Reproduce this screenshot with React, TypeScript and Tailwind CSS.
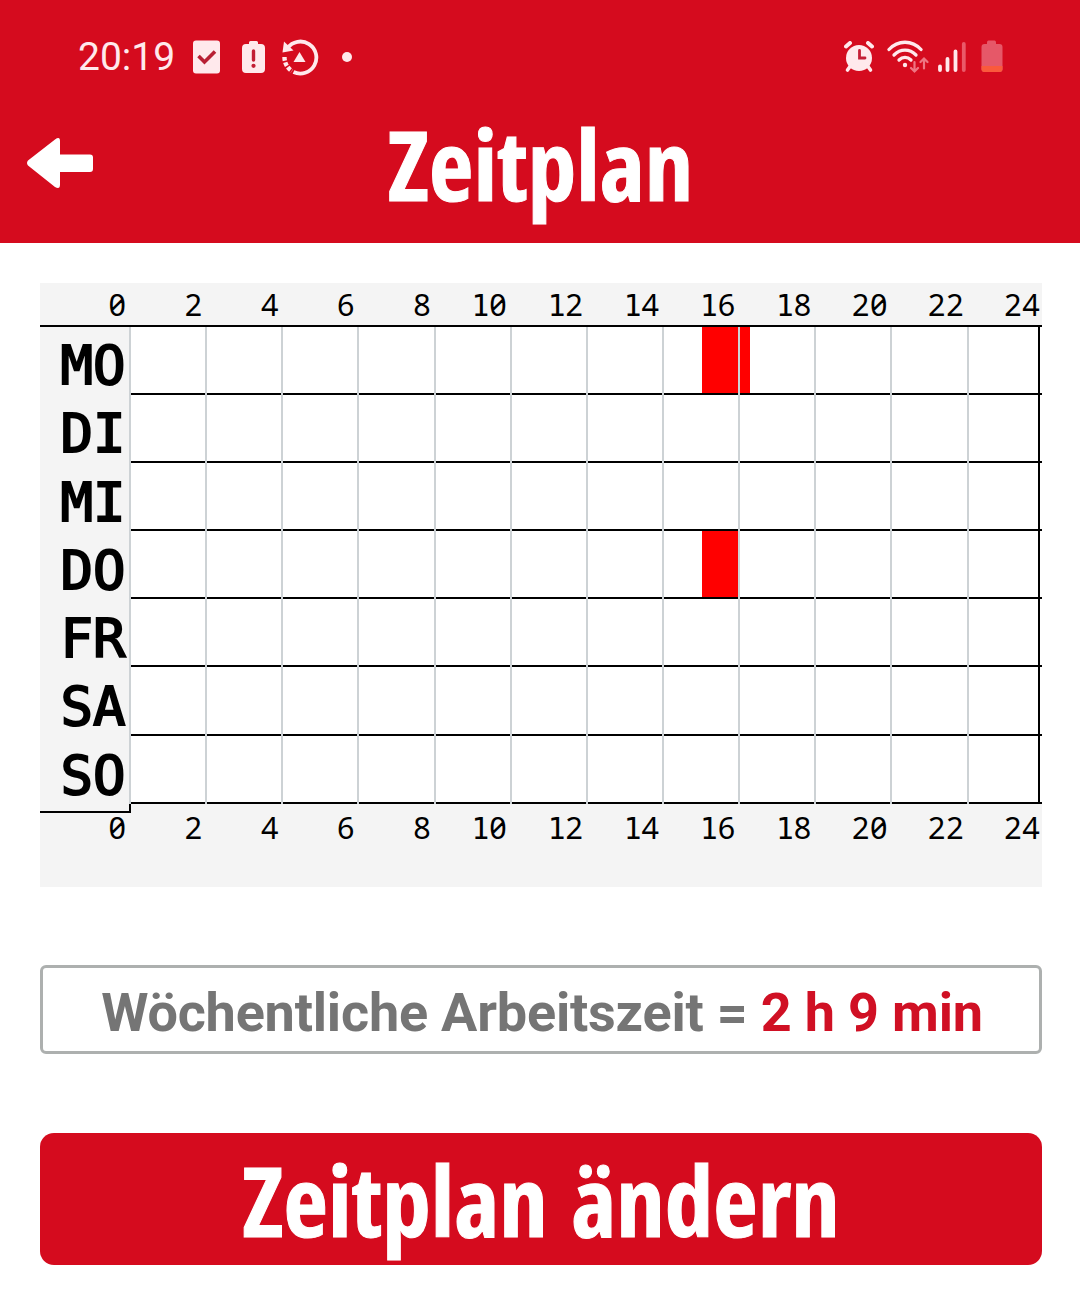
import React from 'react';

interface Slot {
  start: number;
  end: number;
}

interface Day {
  label: string;
  slots: Slot[];
}

const HOURS = [0, 2, 4, 6, 8, 10, 12, 14, 16, 18, 20, 22, 24];
const COLUMNS = HOURS.slice(0, -1);
const HOUR_WIDTH = 38.08;

const days: Day[] = [
  { label: 'MO', slots: [{ start: 15.05, end: 16.31 }] },
  { label: 'DI', slots: [] },
  { label: 'MI', slots: [] },
  { label: 'DO', slots: [{ start: 15.05, end: 16 }] },
  { label: 'FR', slots: [] },
  { label: 'SA', slots: [] },
  { label: 'SO', slots: [] },
];

const StatusBar: React.FC = () => (
  <div className="flex h-[113px] items-start justify-between pl-[78px] pr-[77px] text-[#ffe9ec]">
    <div className="flex h-[113px] items-center">
      <span className="w-[115px] pt-[2px] font-['Roboto'] text-[39px] font-normal leading-none">20:19</span>
      <svg className="h-[34px] w-[27px]" viewBox="0 0 27 34">
        <rect width="27" height="33" y="0.5" rx="3" fill="currentColor" />
        <path d="M5.5 16l6 6L22 11.5" fill="none" stroke="#b81f33" strokeWidth="3.6" />
      </svg>
      <svg className="ml-[22px] h-[34px] w-[23px]" viewBox="0 0 23 34">
        <path d="M7 4V2.500Q7 1 8.500 1h6Q16 1 16 2.500V4h3q4 0 4 4v21q0 4-4 4H4q-4 0-4-4V8q0-4 4-4z" fill="currentColor" />
        <path d="M11.500 11v9" stroke="#c21d33" strokeWidth="3.400" strokeLinecap="round" />
        <circle cx="11.500" cy="25.800" r="2.100" fill="#c21d33" />
      </svg>
      <svg className="ml-[16px] h-[38px] w-[38px]" viewBox="0 0 38 38" fill="none">
        <path d="M6.500 10A16 16 0 1 1 12.500 34" stroke="currentColor" strokeWidth="3.800" />
        <path d="M3.500 19A16 16 0 0 0 11 33" stroke="currentColor" strokeWidth="4.400" strokeDasharray="3.800 1.600" />
        <path d="M3 3.500L1.500 14.500L12.500 12.500z" fill="currentColor" />
        <path d="M18.500 14l6 10H12.500z" fill="currentColor" />
      </svg>
      <span className="ml-[23px] h-[10px] w-[10px] rounded-full bg-[#ffe9ec]" />
    </div>

    <div className="flex h-[113px] items-center">
      <svg className="h-[32px] w-[30px]" viewBox="0 0 30 32" fill="none" stroke="currentColor">
        <circle cx="15" cy="17" r="13" fill="currentColor" stroke="none" />
        <path d="M2 5.500l4-3.500M28 5.500l-4-3.500" strokeWidth="4" strokeLinecap="round" />
        <path d="M6 25.500l-2.500 3.500M24 25.500l2.500 3.500" strokeWidth="3.600" strokeLinecap="round" />
        <path d="M15.500 9.500v7.500h5.500" stroke="#c51e35" strokeWidth="2.800" strokeLinecap="round" />
      </svg>
      <svg className="ml-[13px] h-[34px] w-[42px]" viewBox="0 0 42 34" fill="none" strokeLinecap="round">
        <g stroke="currentColor" strokeWidth="3.300">
          <path d="M2 9.500C11-0.200 25-0.200 34 9.500" />
          <path d="M7 15C13.500 8.500 22.500 8.500 29 15" />
          <path d="M12 20C15.500 16.500 20.500 16.500 24 20" />
        </g>
        <circle cx="18" cy="25" r="2.200" fill="currentColor" />
        <path d="M27.500 22v9.500M24 28l3.500 3.500l3.500-3.500M37 28.500V18.500M33.500 22l3.500-3.500l3.500 3.500" stroke="#ee7683" strokeWidth="2.200" />
      </svg>
      <svg className="ml-[9px] h-[32px] w-[28px]" viewBox="0 0 28 32" stroke="currentColor" strokeWidth="3.800" strokeLinecap="round">
        <path d="M2 25.500v3.500M9.500 18V29M17.500 10.500V29" />
        <path d="M25.800 3v26" stroke="#ea5a69" />
      </svg>
      <svg className="ml-[15px] h-[34px] w-[22px]" viewBox="0 0 22 34">
        <path d="M6 4V2.500Q6 .5 7.500 .5h6Q15 .5 15 2.500V4h3.500Q21.500 4 21.500 7v22q0 3-3 3h-15q-3 0-3-3V7q0-3 3-3z" fill="#e65868" />
        <path d="M.5 26h21v3q0 3-3 3h-15q-3 0-3-3z" fill="#fa5a3c" />
      </svg>
    </div>
  </div>
);

const Header: React.FC = () => (
  <header className="h-[243px] bg-[#d50b1e]">
    <StatusBar />
    <div className="grid h-[100px] grid-cols-[100px_1fr_100px] items-center text-white">
      <button type="button" aria-label="Zurück" className="pl-[27px]">
        <svg className="h-[52px] w-[67px]" viewBox="0 0 67 52" fill="currentColor">
          <path d="M1 23.500L28 2.500Q33 -1 33 4V17.500H63Q66 17.500 66 20.500V32Q66 35 63 35H33V47.500Q33 53 28 50L1 28.500Q-1 26 1 23.500z" />
        </svg>
      </button>
      <h1 className="pl-[1px] text-center font-['Open_Sans'] text-[97px] font-bold leading-none [-webkit-text-stroke:1px_white] [font-stretch:75%]">
        Zeitplan
      </h1>
    </div>
  </header>
);

const HourLabel: React.FC<{ hour: number }> = ({ hour }) => {
  const text = String(hour);
  // The leading 1 keeps its foot serif, the other digits have the slashed zero
  if (text.startsWith('1')) {
    return (
      <>
        <span className="font-['DejaVu_Sans_Mono',monospace] text-[29.500px] tracking-normal">1</span>
        {text.slice(1)}
      </>
    );
  }
  return <>{text}</>;
};

const HourScale: React.FC = () => (
  <div className="ml-[10.500px] flex h-[42px] font-['Noto_Sans',sans-serif] text-[30.500px] leading-[42px] tracking-[0.6px] text-black slashed-zero">
    {HOURS.map((hour) => (
      <span key={hour} className="w-[76.150px] shrink-0 text-right">
        <HourLabel hour={hour} />
      </span>
    ))}
  </div>
);

const DayRow: React.FC<{ day: Day }> = ({ day }) => (
  <div className="relative grid h-[68.100px] grid-cols-[repeat(11,76.150px)_1fr]">
    {day.slots.map((slot) => (
      <div
        key={slot.start}
        className="absolute inset-y-0 bg-[#ff0000]"
        style={{ left: slot.start * HOUR_WIDTH, width: (slot.end - slot.start) * HOUR_WIDTH }}
      />
    ))}
    {COLUMNS.map((hour) => (
      <div key={hour} className="relative flex">
        <div className="w-[2px] bg-[#cdd2d5]" />
        <div className="flex-1 border-b-2 border-black" />
      </div>
    ))}
  </div>
);

const ScheduleChart: React.FC = () => (
  <section className="h-[604px] bg-[#f4f4f4]">
    <HourScale />
    <div className="flex h-[481px]">
      <div className="relative z-10 flex h-[488px] w-[91px] flex-col border-t-2 border-black pt-[3px]">
        {days.map((day) => (
          <div
            key={day.label}
            className="h-[68.300px] pl-[20.500px] font-['DejaVu_Sans_Mono',monospace] text-[54px] leading-[72px] text-black [-webkit-text-stroke:2px_black]"
          >
            {day.label}
          </div>
        ))}
        <div className="absolute bottom-0 right-0 h-[9px] w-full border-b-2 border-r-2 border-black" />
      </div>
      <div className="relative -ml-[2px] flex h-[479px] w-[913px] flex-col border-t-2 border-black bg-white">
        {days.map((day) => (
          <DayRow key={day.label} day={day} />
        ))}
        <div className="absolute inset-y-0 right-[2px] w-[2px] bg-black" />
      </div>
    </div>
    <HourScale />
  </section>
);

const App: React.FC = () => {
  return (
    <div className="h-[1316px] w-[1080px] overflow-hidden bg-white">
      <Header />
      <main className="flex flex-col pl-[40px] pr-[38px] pt-[40px]">
        <ScheduleChart />
        <div className="mt-[78px] flex h-[89px] items-center justify-center whitespace-pre rounded-[6px] border-[3px] border-[#adb0af] pl-[2px] pt-[5px] font-['Roboto'] text-[54px] font-bold tracking-[-0.2px] text-[#757575]">
          Wöchentliche Arbeitszeit = <span className="text-[#d01024]">2 h 9 min</span>
        </div>
        <button
          type="button"
          className="mt-[79px] h-[132px] rounded-[14px] bg-[#d50b1e] pt-[1px] font-['Open_Sans'] text-[97px] font-bold leading-none text-white [-webkit-text-stroke:1px_white] [font-stretch:75%] [word-spacing:6px]"
        >
          Zeitplan ändern
        </button>
      </main>
    </div>
  );
};

export default App;
